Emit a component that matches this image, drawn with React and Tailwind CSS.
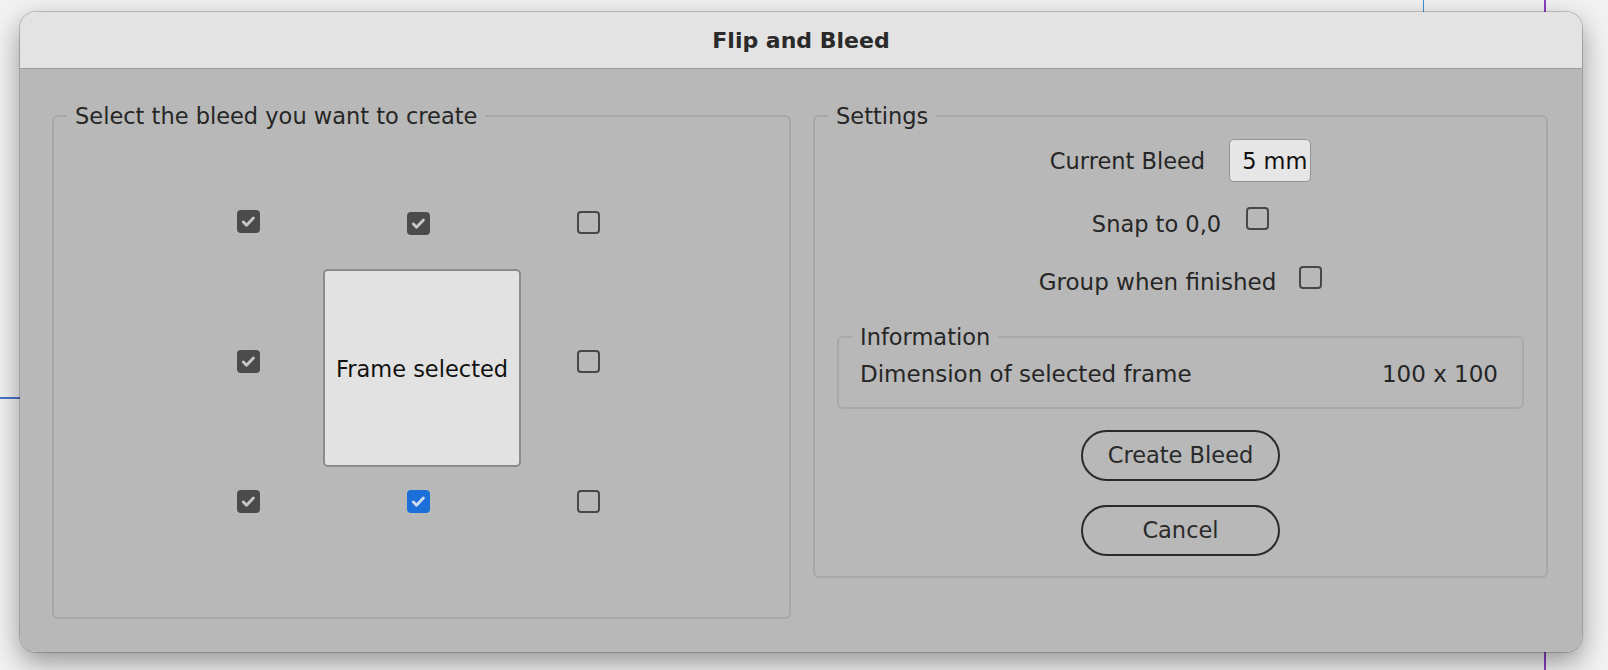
import React from 'react';

const FONT = "font-['DejaVu_Sans',sans-serif]";

function Check({ checked = false, blue = false, className = '' }) {
  if (!checked) {
    return <span className={`block h-[23px] w-[23px] shrink-0 rounded-[4px] border-2 border-[#474747] ${className}`} />;
  }
  return (
    <span
      className={`flex h-[23px] w-[23px] shrink-0 items-center justify-center rounded-[4px] ${blue ? 'bg-[#1c6fd9]' : 'bg-[#4b4b4b]'} ${className}`}
    >
      <svg viewBox="0 0 24 24" className="h-[19px] w-[19px]" fill="none">
        <path
          d="M5.5 12.5l4 4.2 8.7-9.2"
          stroke={blue ? '#cddcf2' : '#c8c8c8'}
          strokeWidth="3.6"
          strokeLinecap="round"
          strokeLinejoin="round"
        />
      </svg>
    </span>
  );
}

function Legend({ children }) {
  return <legend className="ml-[13px] px-[8px] text-[22.5px] leading-[26px] text-[#262626]">{children}</legend>;
}

export default function App() {
  return (
    <div className={`relative h-[670px] w-[1608px] overflow-hidden bg-[#f2f2f2] pl-[20px] pt-[12px] ${FONT}`}>
      {/* guide lines behind the dialog */}
      <div className="absolute left-[1423px] top-0 h-[12px] w-px bg-[#3d8fd0]" />
      <div className="absolute left-[1544px] top-0 h-full w-[2px] bg-[#8a3fc4]" />
      <div className="absolute left-0 top-[397px] h-[2px] w-[20px] bg-[#4a74c8]" />

      <div className="relative flex h-[640px] w-[1562px] flex-col overflow-hidden rounded-[16px] shadow-[0_10px_28px_rgba(0,0,0,0.4),0_0_0_1px_rgba(0,0,0,0.18)]">
        {/* title bar */}
        <div className="flex h-[57px] shrink-0 items-center justify-center border-b border-[#9d9d9d] bg-[#e3e3e3] text-[22px] font-bold text-[#2a2a2a]">
          Flip and Bleed
        </div>

        {/* body */}
        <div className="flex flex-1 items-start gap-[22px] bg-[#b8b8b8] pl-[32px] pt-[34px]">
          {/* bleed selector */}
          <fieldset className="h-[516px] w-[739px] shrink-0 rounded-[6px] border-2 border-[#a7a7a7]">
            <Legend>Select the bleed you want to create</Legend>
            <div className="flex flex-col pl-[109px] pt-[81px]">
              <div className="flex h-[24px] items-start">
                <div className="flex w-[170px] justify-center">
                  <Check checked />
                </div>
                <div className="flex w-[170px] justify-center">
                  <Check checked className="mt-[2px]" />
                </div>
                <div className="flex w-[170px] justify-center">
                  <Check className="mt-px" />
                </div>
              </div>
              <div className="mt-[35px] flex h-[198px] items-start">
                <div className="flex w-[170px] justify-center pt-[81px]">
                  <Check checked />
                </div>
                <div className="flex w-[170px] justify-center">
                  <div className="ml-[8px] flex h-[198px] w-[198px] shrink-0 items-center justify-center rounded-[5px] border-2 border-[#8c8c8c] bg-[#e2e2e2] pt-[4px] text-[22.5px] text-[#111]">
                    Frame selected
                  </div>
                </div>
                <div className="flex w-[170px] justify-center pt-[81px]">
                  <Check />
                </div>
              </div>
              <div className="mt-[23px] flex h-[24px] items-start">
                <div className="flex w-[170px] justify-center">
                  <Check checked />
                </div>
                <div className="flex w-[170px] justify-center">
                  <Check checked blue />
                </div>
                <div className="flex w-[170px] justify-center">
                  <Check />
                </div>
              </div>
            </div>
          </fieldset>

          {/* settings */}
          <fieldset className="h-[475px] w-[735px] shrink-0 rounded-[6px] border-2 border-[#a7a7a7]">
            <Legend>Settings</Legend>
            <div className="flex flex-col items-center text-[22.5px] leading-[26px] text-[#262626]">
              <div className="mt-[10px] flex h-[43px] items-center gap-[24px]">
                <span>Current Bleed</span>
                <div className="flex h-[43px] w-[82px] items-center rounded-[5px] border border-[#939393] bg-[#e6e6e6] pl-[12px] text-[#111]">
                  5 mm
                </div>
              </div>
              <div className="mt-[29px] flex h-[26px] items-center gap-[25px]">
                <span>Snap to 0,0</span>
                <Check className="-translate-y-[6px]" />
              </div>
              <div className="mt-[32px] flex h-[26px] items-center gap-[23px]">
                <span className="text-[23px]">Group when finished</span>
                <Check className="-translate-y-[5px]" />
              </div>
            </div>

            <fieldset className="mx-[22px] mt-[29px] h-[85px] rounded-[6px] border-2 border-[#a9a9a9]">
              <Legend>Information</Legend>
              <div className="mt-[11px] flex items-center justify-between pl-[21px] pr-[24px] text-[23px] leading-[26px] text-[#262626]">
                <span>Dimension of selected frame</span>
                <span>100 x 100</span>
              </div>
            </fieldset>

            <div className="flex flex-col items-center">
              <button
                type="button"
                className="mt-[21px] h-[51px] w-[199px] rounded-full border-2 border-[#2a2a2a] text-[22.5px] text-[#2a2a2a]"
              >
                Create Bleed
              </button>
              <button
                type="button"
                className="mt-[24px] h-[51px] w-[199px] rounded-full border-2 border-[#2a2a2a] text-[22.5px] text-[#2a2a2a]"
              >
                Cancel
              </button>
            </div>
          </fieldset>
        </div>
      </div>
    </div>
  );
}
